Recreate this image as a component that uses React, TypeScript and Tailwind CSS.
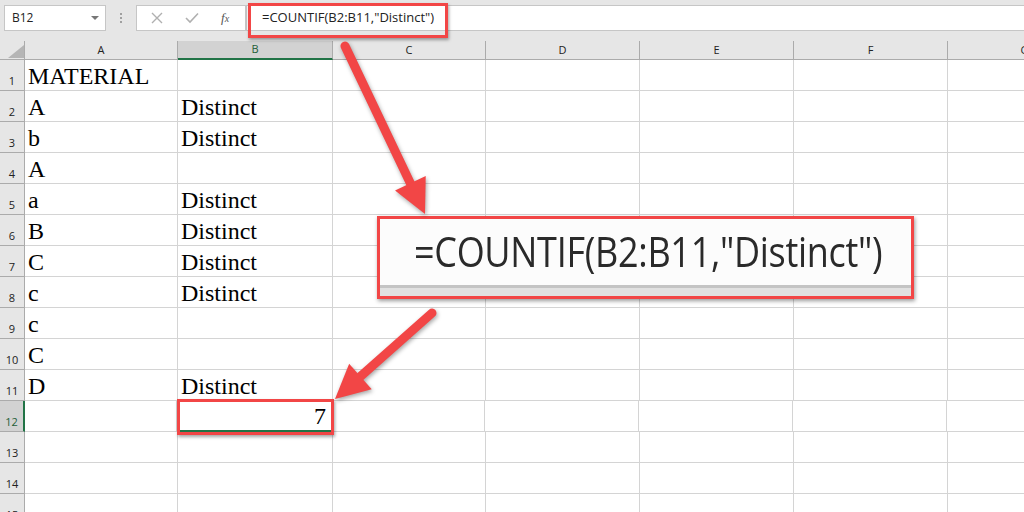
import React from "react";

const COLS = [
  { name: "A", w: 153 },
  { name: "B", w: 155 },
  { name: "C", w: 153 },
  { name: "D", w: 154 },
  { name: "E", w: 154 },
  { name: "F", w: 154 },
  { name: "G", w: 154 },
];

const ROWS: Array<[string, string]> = [
  ["MATERIAL", ""],
  ["A", "Distinct"],
  ["b", "Distinct"],
  ["A", ""],
  ["a", "Distinct"],
  ["B", "Distinct"],
  ["C", "Distinct"],
  ["c", "Distinct"],
  ["c", ""],
  ["C", ""],
  ["D", "Distinct"],
  ["", ""],
  ["", ""],
  ["", ""],
  ["", ""],
];

function Arrow({
  from,
  to,
  head = 34,
  half = 17,
  shaft = 9,
}: {
  from: [number, number];
  to: [number, number];
  head?: number;
  half?: number;
  shaft?: number;
}) {
  const dx = to[0] - from[0];
  const dy = to[1] - from[1];
  const len = Math.hypot(dx, dy);
  const ux = dx / len;
  const uy = dy / len;
  const px = -uy;
  const py = ux;
  const bx = to[0] - ux * head;
  const by = to[1] - uy * head;
  const pts = [
    [bx + px * half, by + py * half],
    [to[0], to[1]],
    [bx - px * half, by - py * half],
  ]
    .map((p) => p.join(","))
    .join(" ");
  return (
    <g>
      <line
        x1={from[0]}
        y1={from[1]}
        x2={bx + ux * 4}
        y2={by + uy * 4}
        stroke="#f24646"
        strokeWidth={shaft}
        strokeLinecap="round"
      />
      <polygon points={pts} fill="#f24646" />
    </g>
  );
}

export default function App() {
  return (
    <div
      className="relative h-[512px] w-[1024px] overflow-hidden bg-white"
      style={{ fontFamily: '"Open Sans", "Noto Sans", sans-serif' }}
    >
      {/* Formula bar */}
      <div className="flex h-[41px] items-start bg-[#e6e6e6] pt-[5px]">
        <div className="ml-[4px] flex h-[26px] w-[102px] items-center justify-between border border-[#c6c6c6] bg-white pl-[7px] pr-[6px] text-[12px] text-[#222]">
          <span>B12</span>
          <span className="h-0 w-0 border-x-[4px] border-t-[4px] border-x-transparent border-t-[#777]" />
        </div>
        <div className="ml-[14px] mr-[14px] flex h-[26px] flex-col items-center justify-center gap-[2px]">
          <span className="h-[2px] w-[2px] bg-[#a0a0a0]" />
          <span className="h-[2px] w-[2px] bg-[#a0a0a0]" />
          <span className="h-[2px] w-[2px] bg-[#a0a0a0]" />
        </div>
        <div className="flex h-[26px] w-[110px] items-center border border-[#c6c6c6] bg-white">
          <svg width="12" height="12" viewBox="0 0 12 12" className="ml-[14px]">
            <path d="M1 1 L11 11 M11 1 L1 11" stroke="#b0b0b0" strokeWidth="1.4" />
          </svg>
          <svg width="14" height="12" viewBox="0 0 14 12" className="ml-[22px]">
            <path d="M1 6 L5 10 L13 1.5" stroke="#b0b0b0" strokeWidth="1.6" fill="none" />
          </svg>
          <span
            className="ml-[22px] text-[13px] italic text-[#555]"
            style={{ fontFamily: '"Liberation Serif", serif' }}
          >
            f<span className="text-[10px]">x</span>
          </span>
        </div>
        <div className="flex h-[26px] flex-1 items-center border-y border-l border-[#c6c6c6] bg-white pl-[15px] text-[13px] text-[#222]">
          =COUNTIF(B2:B11,"Distinct")
        </div>
      </div>

      {/* Sheet grid */}
      <div className="flex h-[19px]">
        <div className="relative w-[25px] shrink-0 border-r border-b border-[#ababab] bg-[#e6e6e6]">
          <svg width="16" height="13" className="absolute left-[8px] top-[4px]">
            <polygon points="16,0 16,13 0,13" fill="#b5b5b5" />
          </svg>
        </div>
        {COLS.map((c) => (
          <div
            key={c.name}
            style={{ width: c.w }}
            className={
              c.name === "B"
                ? "flex shrink-0 items-center justify-center border-r border-b-2 border-r-[#ababab] border-b-[#217346] bg-[#d2d2d2] text-[11px] text-[#1e5e38]"
                : "flex shrink-0 items-center justify-center border-r border-b border-[#ababab] bg-[#e6e6e6] text-[11px] text-[#222]"
            }
          >
            {c.name}
          </div>
        ))}
      </div>

      {ROWS.map(([a, b], i) => {
        const rowNo = i + 1;
        const selected = rowNo === 12;
        return (
          <div key={rowNo} className="flex h-[31px]">
            <div
              className={
                selected
                  ? "flex w-[25px] shrink-0 items-end justify-center border-r-2 border-b border-r-[#217346] border-b-[#ababab] bg-[#d2d2d2] pb-[4px] text-[11px] leading-none text-[#1e5e38]"
                  : "flex w-[25px] shrink-0 items-end justify-center border-r border-b border-[#ababab] bg-[#e6e6e6] pb-[4px] text-[11px] leading-none text-[#222]"
              }
            >
              {rowNo}
            </div>
            {COLS.map((c, ci) => (
              <div
                key={c.name}
                style={{ width: ci === 0 && selected ? c.w - 1 : c.w, fontFamily: '"Liberation Serif", serif' }}
                className={
                  ci === 1 && selected
                    ? "relative flex shrink-0 items-end justify-end border-r border-b-2 border-r-[#d4d4d4] border-b-[#217346] pr-[5px] text-[24px] leading-[28px] text-black"
                    : "flex shrink-0 items-end border-r border-b border-[#d4d4d4] pl-[3px] text-[24px] leading-[28px] text-black"
                }
              >
                {ci === 0 ? a : ci === 1 ? (selected ? "7" : b) : ""}
              </div>
            ))}
          </div>
        );
      })}

      {/* Red highlight on formula bar */}
      <div className="absolute left-[248px] top-[3px] h-[35px] w-[200px] border-[3px] border-[#f24646] shadow-[1px_2px_3px_rgba(0,0,0,0.35)]" />

      {/* Red highlight on B12 */}
      <div className="absolute left-[177px] top-[399px] h-[36px] w-[157px] border-[3px] border-[#f24646] shadow-[1px_2px_3px_rgba(0,0,0,0.35)]" />

      {/* Enlarged formula callout */}
      <div className="absolute left-[377px] top-[216px] flex h-[83px] w-[537px] flex-col overflow-hidden border-[3px] border-[#f24646] bg-[#fcfcfc] shadow-[1px_2px_4px_rgba(0,0,0,0.4)]">
        <div className="flex flex-1 items-center pl-[34px]">
          <span className="inline-block origin-left scale-y-[1.18] text-[36px] leading-none tracking-[-0.3px] text-[#2a2a2a]">
            =COUNTIF(B2:B11,"Distinct")
          </span>
        </div>
        <div className="h-[3px] bg-[#c4c4c4]" />
        <div className="h-[8px] bg-[#e1e1e1]" />
      </div>

      {/* Arrows */}
      <svg
        width="1024"
        height="512"
        className="pointer-events-none absolute left-0 top-0 drop-shadow-[1px_2px_2px_rgba(0,0,0,0.35)]"
      >
        <Arrow from={[345, 46]} to={[425, 214]} />
        <Arrow from={[432, 313]} to={[335, 399]} />
      </svg>
    </div>
  );
}
